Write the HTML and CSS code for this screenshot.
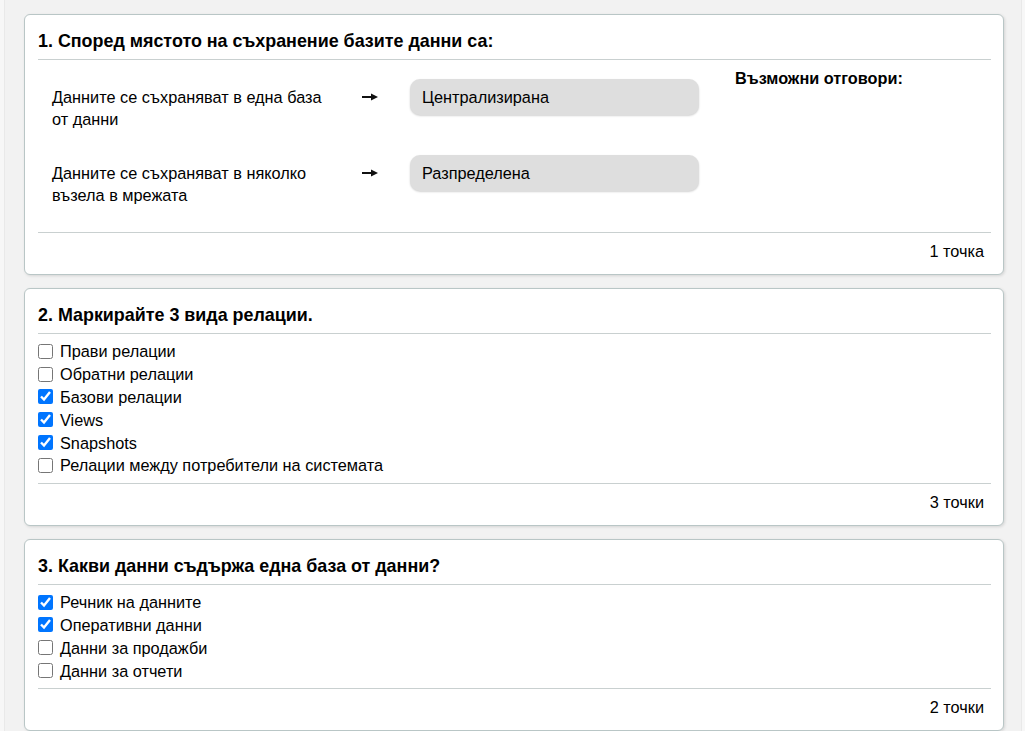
FILE: index.html
```html
<!DOCTYPE html>
<html lang="bg">
<head>
<meta charset="utf-8">
<title>Тест</title>
<link rel="stylesheet" href="styles.css">
</head>
<body>
<div class="page">
  <section class="card">
    <h2 class="q-title">1. Според мястото на съхранение базите данни са:</h2>
    <div class="match">
      <div class="pairs">
        <div class="pair">
          <div class="pair-text">Данните се съхраняват в една база от данни</div>
          <div class="pair-arrow"><svg width="16" height="8" viewBox="0 0 16 8"><rect x="0" y="3" width="11" height="2" fill="#111"/><polygon points="9,0.5 16,4 9,7.5" fill="#111"/></svg></div>
          <div class="answer">Централизирана</div>
        </div>
        <div class="pair">
          <div class="pair-text">Данните се съхраняват в няколко възела в мрежата</div>
          <div class="pair-arrow"><svg width="16" height="8" viewBox="0 0 16 8"><rect x="0" y="3" width="11" height="2" fill="#111"/><polygon points="9,0.5 16,4 9,7.5" fill="#111"/></svg></div>
          <div class="answer">Разпределена</div>
        </div>
      </div>
      <div class="options">
        <div class="options-title">Възможни отговори:</div>
      </div>
    </div>
    <div class="q-foot">1 точка</div>
  </section>

  <section class="card">
    <h2 class="q-title">2. Маркирайте 3 вида релации.</h2>
    <div class="choices">
      <label class="choice"><input type="checkbox">Прави релации</label>
      <label class="choice"><input type="checkbox">Обратни релации</label>
      <label class="choice"><input type="checkbox" checked>Базови релации</label>
      <label class="choice"><input type="checkbox" checked>Views</label>
      <label class="choice"><input type="checkbox" checked>Snapshots</label>
      <label class="choice"><input type="checkbox">Релации между потребители на системата</label>
    </div>
    <div class="q-foot">3 точки</div>
  </section>

  <section class="card">
    <h2 class="q-title">3. Какви данни съдържа една база от данни?</h2>
    <div class="choices">
      <label class="choice"><input type="checkbox" checked>Речник на данните</label>
      <label class="choice"><input type="checkbox" checked>Оперативни данни</label>
      <label class="choice"><input type="checkbox">Данни за продажби</label>
      <label class="choice"><input type="checkbox">Данни за отчети</label>
    </div>
    <div class="q-foot">2 точки</div>
  </section>
</div>
</body>
</html>
```

FILE: styles.css
```css
html, body {
  margin: 0;
  padding: 0;
  background: #f7f7f7;
}
body {
  font-family: "Liberation Sans", Arial, sans-serif;
  font-size: 16.3px;
  color: #000;
}
.page {
  margin-left: 4px;
  margin-right: 3px;
  border-left: 1px solid #e9e9e9;
  border-right: 1px solid #e9e9e9;
  background: #f2f2f2;
  padding: 14px 17px 20px 19px;
  min-height: 731px;
  box-sizing: border-box;
}
.card {
  background: #fff;
  border: 1px solid #b9c6c6;
  border-radius: 6px;
  box-shadow: 1px 1px 3px rgba(0, 0, 0, 0.12);
  padding: 16px 12px 0 13px;
  margin-bottom: 13px;
}
.card + .card + .card {
  margin-top: 2px;
}
.q-title {
  margin: 0;
  font-size: 17.9px;
  line-height: 20px;
  font-weight: bold;
  padding-bottom: 8px;
  border-bottom: 1px solid #c9d0d0;
}
.match {
  display: flex;
  border-bottom: 1px solid #c9d0d0;
}
.pairs {
  display: flex;
  flex-direction: column;
  gap: 25px;
  padding: 19px 0 26px 14px;
}
.pair {
  display: flex;
  align-items: flex-start;
}
.pair-text {
  width: 285px;
  padding-top: 7px;
  line-height: 22px;
}
.pair-arrow {
  width: 48px;
  padding-left: 25px;
  height: 36px;
  display: flex;
  align-items: center;
}
.pair-arrow svg {
  display: block;
}
.answer {
  width: 277px;
  height: 36px;
  line-height: 36px;
  padding-left: 12px;
  background: #dedede;
  border-radius: 10px;
  box-shadow: 0 1px 2px rgba(0, 0, 0, 0.18);
}
.options {
  padding: 9px 0 0 36px;
}
.options-title {
  font-weight: bold;
  line-height: 18px;
}
.choices {
  display: flex;
  flex-direction: column;
  padding: 6px 0 6px;
  border-bottom: 1px solid #c9d0d0;
}
.choice {
  display: flex;
  align-items: center;
  height: 22.8px;
  line-height: 18px;
}
.choice input {
  width: 15px;
  height: 15px;
  margin: 0 7px 0 0;
}
.q-foot {
  text-align: right;
  line-height: 18px;
  padding: 9px 7px 14px 0;
}
```
